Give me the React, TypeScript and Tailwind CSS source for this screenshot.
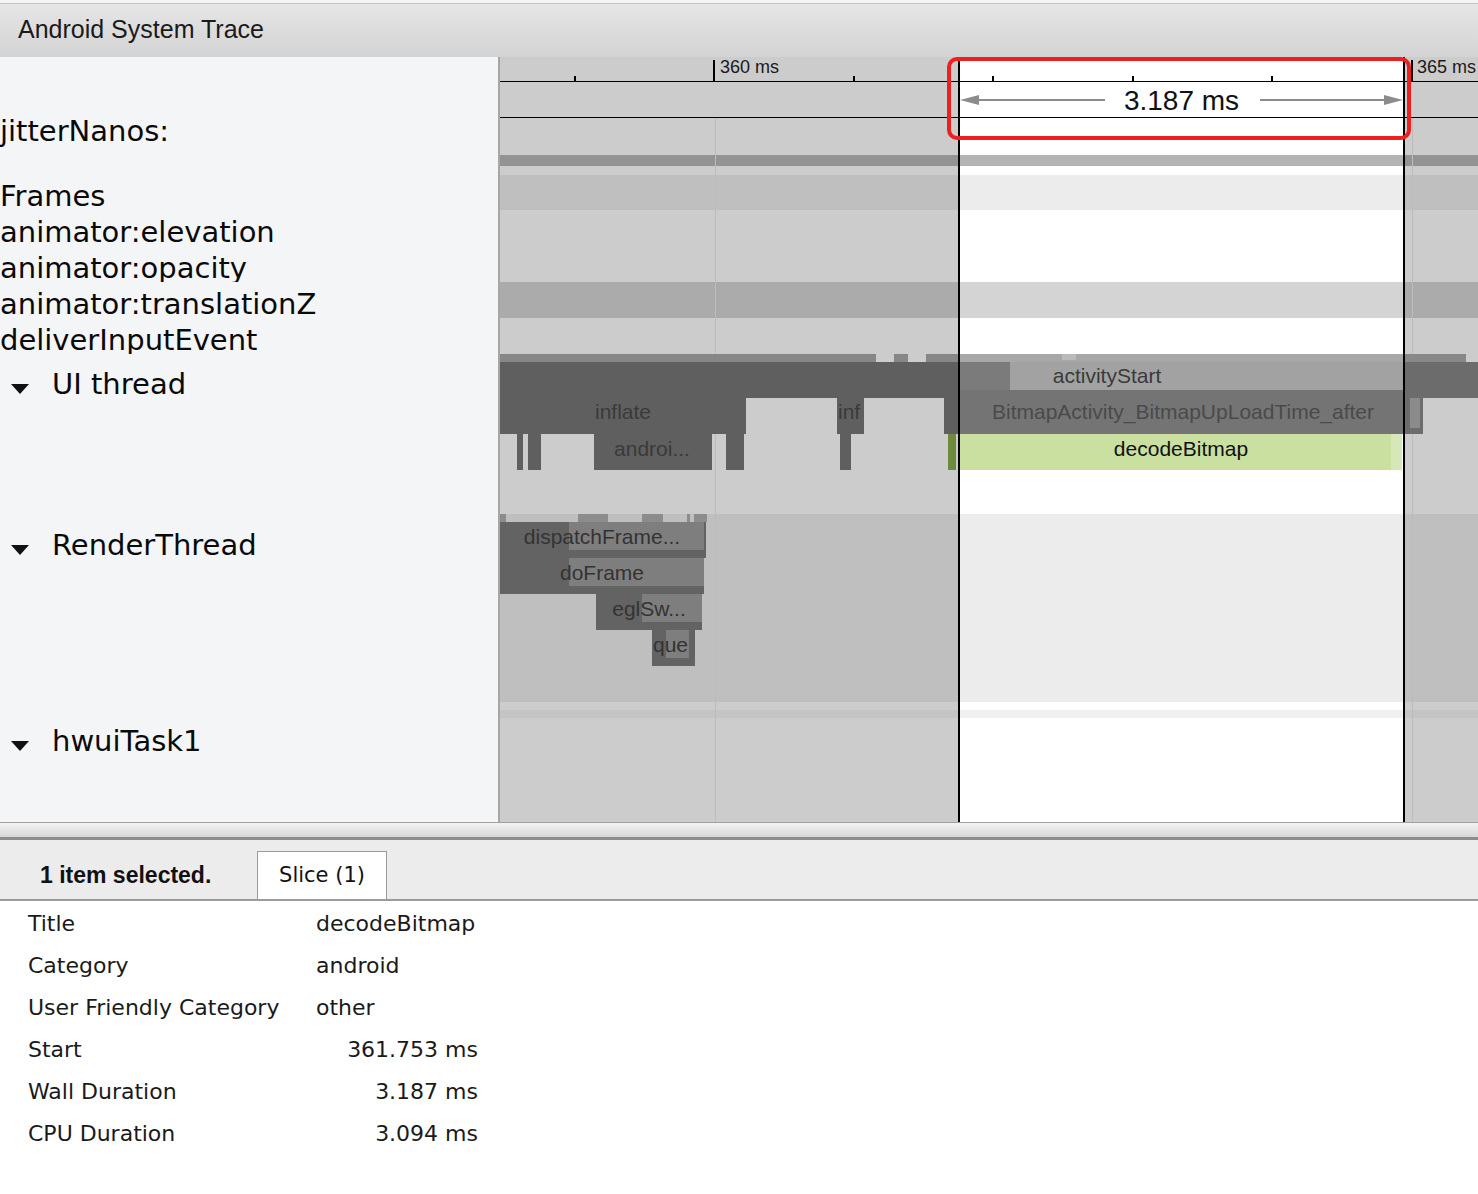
import React from "react";

// track canvas origin (page coords)
const TX = 500;
const TY = 57;

type Band = { h: string; out: string; sel: string };

// background rows of the track area: outside selection / inside selection
const BANDS: Band[] = [
  { h: "h-[24px]", out: "bg-[#cccccc]", sel: "bg-white" },
  { h: "h-px", out: "bg-black", sel: "bg-black" },
  { h: "h-[35px]", out: "bg-[#cccccc]", sel: "bg-white" },
  { h: "h-px", out: "bg-black", sel: "bg-black" },
  { h: "h-[37px]", out: "bg-[#cccccc]", sel: "bg-white" },
  { h: "h-[11px]", out: "bg-[#939393]", sel: "bg-[#b4b4b4]" },
  { h: "h-[9px]", out: "bg-[#cccccc]", sel: "bg-white" },
  { h: "h-[35px]", out: "bg-[#bfbfbf]", sel: "bg-[#ececec]" },
  { h: "h-[72px]", out: "bg-[#cccccc]", sel: "bg-white" },
  { h: "h-[36px]", out: "bg-[#ababab]", sel: "bg-[#d4d4d4]" },
  { h: "h-[36px]", out: "bg-[#cccccc]", sel: "bg-white" },
  { h: "h-[160px]", out: "bg-[#cccccc]", sel: "bg-white" },
  { h: "h-[188px]", out: "bg-[#bfbfbf]", sel: "bg-[#ececec]" },
  { h: "h-[8px]", out: "bg-[#cccccc]", sel: "bg-white" },
  { h: "h-[8px]", out: "bg-[#c4c4c4]", sel: "bg-[#f0f0f0]" },
  { h: "h-[104px]", out: "bg-[#cccccc]", sel: "bg-white" },
];

type Slice = [number, number, number, number, string];

const SLICES: Slice[] = [
  // UI thread
  [500, 876, 354, 362, "bg-[#878787]"],
  [894, 908, 354, 362, "bg-[#878787]"],
  [926, 959, 354, 362, "bg-[#878787]"],
  [959, 1404, 354, 362, "bg-[#a8a8a8]"],
  [1062, 1076, 354, 360, "bg-[#bababa]"],
  [1404, 1466, 354, 362, "bg-[#888888]"],
  [500, 959, 362, 398, "bg-[#5f5f5f]"],
  [959, 1010, 362, 390, "bg-[#7b7b7b]"],
  [1010, 1404, 362, 390, "bg-[#a2a2a2]"],
  [1404, 1478, 362, 398, "bg-[#6c6c6c]"],
  [959, 1404, 390, 434, "bg-[#747474]"],
  [1404, 1423, 398, 434, "bg-[#6c6c6c]"],
  [1410, 1420, 398, 428, "bg-[#8b8b8b]"],
  [500, 746, 398, 434, "bg-[#5f5f5f]"],
  [837, 864, 398, 434, "bg-[#5f5f5f]"],
  [944, 959, 398, 434, "bg-[#5f5f5f]"],
  [517, 523, 434, 470, "bg-[#5f5f5f]"],
  [528, 541, 434, 470, "bg-[#5f5f5f]"],
  [594, 712, 434, 470, "bg-[#5f5f5f]"],
  [726, 744, 434, 470, "bg-[#5f5f5f]"],
  [840, 851, 434, 470, "bg-[#5f5f5f]"],
  [948, 956, 434, 470, "bg-[#6e8b3d]"],
  [959, 1391, 434, 470, "bg-[#c9e0a1]"],
  [1391, 1402, 434, 470, "bg-[#d7e8b8]"],
  // RenderThread
  [500, 506, 514, 522, "bg-[#8c8c8c]"],
  [578, 608, 514, 522, "bg-[#8c8c8c]"],
  [642, 663, 514, 522, "bg-[#8c8c8c]"],
  [687, 690, 514, 522, "bg-[#8c8c8c]"],
  [694, 707, 514, 522, "bg-[#8c8c8c]"],
  [500, 706, 522, 558, "bg-[#636363]"],
  [569, 704, 522, 550, "bg-[#7e7e7e]"],
  [500, 704, 558, 594, "bg-[#636363]"],
  [569, 704, 558, 586, "bg-[#7e7e7e]"],
  [596, 702, 594, 630, "bg-[#636363]"],
  [642, 702, 594, 622, "bg-[#7e7e7e]"],
  [652, 695, 630, 666, "bg-[#636363]"],
  [666, 689, 630, 658, "bg-[#7e7e7e]"],
];

type Label = { t: string; x: number; y: number; c: string; left?: boolean };

const LABELS: Label[] = [
  { t: "activityStart", x: 1107, y: 376, c: "text-[#3a3a3a]" },
  { t: "inflate", x: 623, y: 412, c: "text-[#3a3a3a]" },
  { t: "inf", x: 838, y: 412, c: "text-[#3a3a3a]", left: true },
  { t: "BitmapActivity_BitmapUpLoadTime_after", x: 1183, y: 412, c: "text-[#4a4a4a]" },
  { t: "androi...", x: 652, y: 449, c: "text-[#3a3a3a]" },
  { t: "decodeBitmap", x: 1181, y: 449, c: "text-[#111111]" },
  { t: "dispatchFrame...", x: 602, y: 537, c: "text-[#333333]" },
  { t: "doFrame", x: 602, y: 573, c: "text-[#333333]" },
  { t: "eglSw...", x: 649, y: 609, c: "text-[#333333]" },
  { t: "que", x: 653, y: 645, c: "text-[#333333]", left: true },
];

const MINOR_TICKS = [575, 854, 993, 1133, 1272];

const DETAILS: [string, string, boolean][] = [
  ["Title", "decodeBitmap", false],
  ["Category", "android", false],
  ["User Friendly Category", "other", false],
  ["Start", "361.753 ms", true],
  ["Wall Duration", "3.187 ms", true],
  ["CPU Duration", "3.094 ms", true],
];

function Caret() {
  return (
    <svg width="18" height="10" viewBox="0 0 18 10" className="ml-[11px] mt-[18px] shrink-0">
      <polygon points="0,0 18,0 9,10" fill="#111" />
    </svg>
  );
}

function ThreadLabel({ name, pt, h }: { name: string; pt: string; h: string }) {
  return (
    <div className={`${h} ${pt}`}>
      <div className="flex h-[36px] items-start">
        <Caret />
        <span className="ml-[23px] leading-[36px] whitespace-nowrap">{name}</span>
      </div>
    </div>
  );
}

// track name row; the trace viewer clips descenders at the row edge
function NameRow({ children, clip }: { children: React.ReactNode; clip?: boolean }) {
  return (
    <div className={`h-[36px] pt-[9px] leading-[27px] whitespace-nowrap ${clip ? "overflow-hidden" : ""}`}>
      {children}
    </div>
  );
}

export default function App() {
  return (
    <div className="h-[1194px] w-full overflow-hidden bg-white font-['Liberation_Sans',Arial,sans-serif] text-[#111]">
      <div className="h-[3px] bg-[#f4f4f4]" />
      <div className="h-px bg-[#c4c4c4]" />
      <div className="flex h-[53px] items-center bg-gradient-to-b from-[#e6e6e6] to-[#d3d3d3] pl-[18px] pb-[1px] text-[25px] text-[#1a1a1a]">
        Android System Trace
      </div>

      <div className="flex h-[765px]">
        {/* track names */}
        <div className="w-[500px] shrink-0 border-r-2 border-[#a6a6a6] bg-[#f4f5f7] font-['DejaVu_Sans',sans-serif] text-[29px] text-[#0a0a0a]">
          <div className="h-[52px]" />
          <NameRow>jitterNanos:</NameRow>
          <div className="h-[29px]" />
          <NameRow>Frames</NameRow>
          <NameRow>animator:elevation</NameRow>
          <NameRow clip>animator:opacity</NameRow>
          <NameRow>animator:translationZ</NameRow>
          <NameRow clip>deliverInputEvent</NameRow>
          <ThreadLabel name="UI thread" pt="pt-[12px]" h="h-[160px]" />
          <ThreadLabel name="RenderThread" pt="pt-[13px]" h="h-[196px]" />
          <ThreadLabel name="hwuiTask1" pt="pt-[13px]" h="h-[112px]" />
        </div>

        {/* timeline */}
        <div className="relative flex-1 overflow-hidden">
          <div className="flex flex-col">
            {BANDS.map((b, i) => (
              <div key={i} className={`flex ${b.h}`}>
                <div className={`w-[459px] ${b.out}`} />
                <div className={`w-[445px] ${b.sel}`} />
                <div className={`flex-1 ${b.out}`} />
              </div>
            ))}
          </div>

          {/* grid lines */}
          <div className="absolute left-[215px] top-[61px] h-[704px] w-px bg-[#bcbcbc]" />
          <div className="absolute left-[912px] top-[61px] h-[704px] w-px bg-[#bcbcbc]" />

          {SLICES.map(([x1, x2, y1, y2, c], i) => (
            <div
              key={i}
              className={`absolute ${c}`}
              style={{ left: x1 - TX, top: y1 - TY, width: x2 - x1, height: y2 - y1 }}
            />
          ))}

          {LABELS.map((l, i) => (
            <span
              key={i}
              className={`absolute whitespace-nowrap text-[21px] leading-[24px] ${l.c} ${l.left ? "" : "-translate-x-1/2"}`}
              style={{ left: l.x - TX, top: l.y - TY - 12 }}
            >
              {l.t}
            </span>
          ))}

          {/* ruler */}
          <div className="absolute left-[213px] top-[3px] h-[22px] w-[2px] bg-black" />
          <span className="absolute left-[220px] top-0 text-[18px] leading-[20px] text-[#1a1a1a]">360 ms</span>
          <div className="absolute left-[911px] top-[3px] h-[22px] w-[2px] bg-black" />
          <span className="absolute left-[917px] top-0 whitespace-nowrap text-[18px] leading-[20px] text-[#1a1a1a]">365 ms</span>
          {MINOR_TICKS.map((x) => (
            <div key={x} className="absolute top-[19px] h-[6px] w-[2px] bg-black" style={{ left: x - TX - 1 }} />
          ))}

          {/* selection edges */}
          <div className="absolute left-[458px] top-0 h-full w-[2px] bg-black" />
          <div className="absolute left-[903px] top-0 h-full w-[2px] bg-black" />

          {/* measurement */}
          <svg className="absolute left-[459px] top-[33px]" width="445" height="20" viewBox="0 0 445 20">
            <line x1="18" y1="10" x2="146" y2="10" stroke="#8c8c8c" strokeWidth="2" />
            <line x1="301" y1="10" x2="428" y2="10" stroke="#8c8c8c" strokeWidth="2" />
            <polygon points="1,10 20,5 20,15" fill="#8c8c8c" />
            <polygon points="444,10 425,5 425,15" fill="#8c8c8c" />
          </svg>
          <div className="absolute left-[459px] top-[28px] w-[445px] text-center text-[28px] leading-[32px] text-[#111]">
            3.187 ms
          </div>

          <div className="absolute left-[447px] top-0 h-[83px] w-[464px] rounded-[10px] border-4 border-[#ee1f1f]" />
        </div>
      </div>

      {/* splitter */}
      <div className="h-px bg-[#9f9f9f]" />
      <div className="h-[14px] bg-gradient-to-b from-[#f3f3f3] to-[#d6d6d6]" />
      <div className="h-[3px] bg-[#8c8c8c]" />

      {/* tabs */}
      <div className="flex h-[59px] items-end bg-[#ececec] pl-[40px]">
        <div className="flex h-[48px] w-[217px] items-center font-['Liberation_Sans',Arial,sans-serif] text-[23px] font-bold text-[#111]">
          1 item selected.
        </div>
        <div className="flex h-[48px] w-[130px] items-center justify-center border border-b-0 border-[#9b9b9b] bg-white font-['DejaVu_Sans',sans-serif] text-[21px] text-[#111]">
          Slice (1)
        </div>
      </div>
      <div className="h-[2px] bg-[#9b9b9b]" />

      {/* details */}
      <div className="pl-[28px] pt-px font-['DejaVu_Sans',sans-serif] text-[22px] text-[#1a1a1a]">
        {DETAILS.map(([k, v, num]) => (
          <div key={k} className="grid h-[42px] grid-cols-[288px_162px] items-center">
            <span className="whitespace-nowrap">{k}</span>
            <span className={`whitespace-nowrap ${num ? "text-right" : ""}`}>{v}</span>
          </div>
        ))}
      </div>
    </div>
  );
}
